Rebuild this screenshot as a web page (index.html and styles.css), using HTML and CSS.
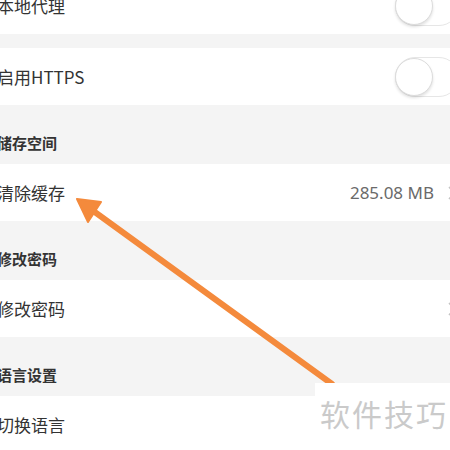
FILE: index.html
```html
<!DOCTYPE html>
<html lang="zh-CN">
<head>
    <meta charset="UTF-8">
    <meta name="viewport" content="width=device-width, initial-scale=1.0">
    <title>设置</title>
    <link rel="stylesheet" href="styles.css">
</head>
<body>
    <div class="settings">
        <!-- 网络 -->
        <div class="row row-first">
            <span class="label">本地代理</span>
            <div class="switch"><span class="knob"></span></div>
        </div>
        <div class="row row-gap">
            <span class="label">启用HTTPS</span>
            <div class="switch"><span class="knob"></span></div>
        </div>

        <!-- 储存空间 -->
        <div class="section-title">储存空间</div>
        <div class="row">
            <span class="label">清除缓存</span>
            <span class="value">285.08 MB</span>
            <svg class="chevron" width="8" height="14" viewBox="0 0 8 14"><path d="M1 1l6 6-6 6" fill="none" stroke="#c4c4c4" stroke-width="1.6"/></svg>
        </div>

        <!-- 修改密码 -->
        <div class="section-title">修改密码</div>
        <div class="row">
            <span class="label">修改密码</span>
            <svg class="chevron" width="8" height="14" viewBox="0 0 8 14"><path d="M1 1l6 6-6 6" fill="none" stroke="#c4c4c4" stroke-width="1.6"/></svg>
        </div>

        <!-- 语言设置 -->
        <div class="section-title">语言设置</div>
        <div class="row">
            <span class="label">切换语言</span>
        </div>
    </div>

    <!-- 标注箭头 -->
    <svg class="arrow" width="450" height="450" viewBox="0 0 450 450">
        <line x1="332" y1="384" x2="92" y2="210" stroke="#f48a3c" stroke-width="6" stroke-linecap="round"/>
        <polygon points="77,199 101,202 88,222" fill="#f48a3c" stroke="#f48a3c" stroke-width="2" stroke-linejoin="round"/>
    </svg>

    <div class="watermark">软件技巧</div>
</body>
</html>
```

FILE: styles.css
```css
* {
    margin: 0;
    padding: 0;
    box-sizing: border-box;
}

body {
    width: 450px;
    height: 450px;
    overflow: hidden;
    position: relative;
    background-color: #f4f4f4;
    font-family: "Noto Sans CJK SC", "Noto Sans", sans-serif;
    color: #333;
}

.settings {
    margin-left: -3px;
    margin-top: -23px;
}

.row {
    display: flex;
    align-items: center;
    height: 57px;
    background-color: #fff;
    overflow: hidden;
}

.row-gap {
    margin-top: 14px;
}

.label {
    font-size: 17px;
    line-height: 24px;
    color: #333;
}

.value {
    margin-left: auto;
    margin-right: 14px;
    font-family: "Noto Sans", sans-serif;
    font-size: 17px;
    color: #6a6a6a;
}

.chevron {
    margin-left: auto;
    margin-right: -6px;
    flex-shrink: 0;
}

.value + .chevron {
    margin-left: 0;
}

.section-title {
    height: 59px;
    padding-top: 28px;
    font-size: 15px;
    line-height: 20px;
    font-weight: 600;
    color: #333;
}

.switch {
    margin-left: auto;
    margin-right: -9px;
    position: relative;
    width: 64px;
    height: 40px;
    border: 1px solid #e6e6e6;
    border-radius: 20px;
    background-color: #fff;
    flex-shrink: 0;
}

.knob {
    position: absolute;
    left: -1px;
    top: 0;
    width: 38px;
    height: 38px;
    border-radius: 50%;
    border: 1.5px solid #dcdcdc;
    background-color: #fff;
    box-shadow: 0 2px 3px rgba(0, 0, 0, 0.12);
}

.arrow {
    position: absolute;
    left: 0;
    top: 0;
}

.watermark {
    position: absolute;
    left: 315px;
    top: 383px;
    width: 135px;
    height: 67px;
    background-color: #fff;
    padding-left: 5px;
    padding-top: 10px;
    font-size: 30px;
    line-height: 40px;
    letter-spacing: 2px;
    color: #cacaca;
}
```
